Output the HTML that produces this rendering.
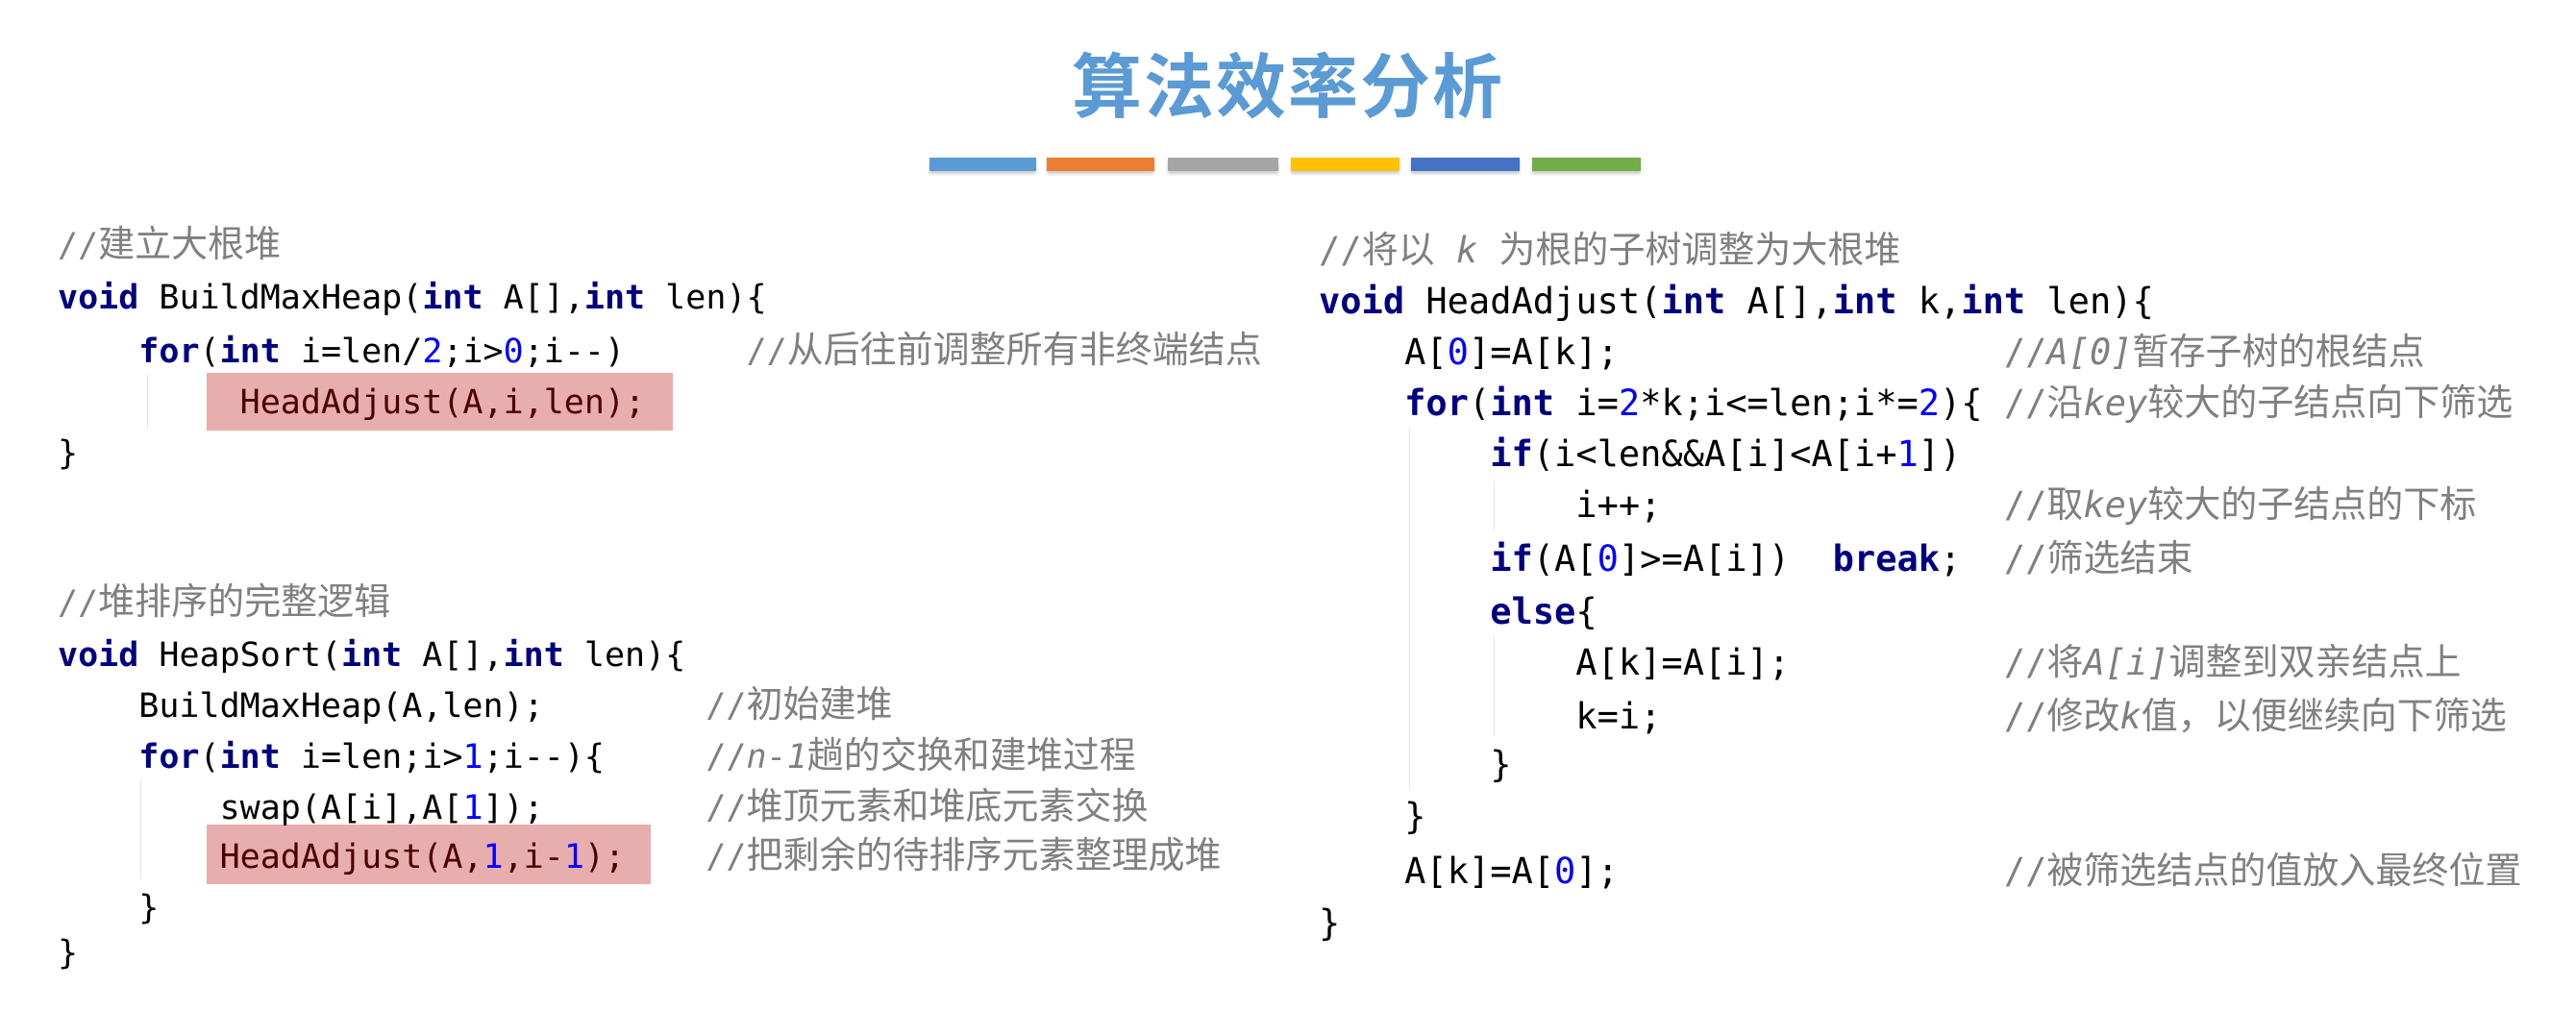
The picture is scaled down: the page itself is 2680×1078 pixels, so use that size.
<!DOCTYPE html>
<html><head><meta charset="utf-8"><style>
body{margin:0;width:2680px;height:1078px;background:#fff;position:relative;overflow:hidden;}
.t{position:absolute;left:0;width:2680px;top:38px;text-align:center;font:bold 73px "Noto Sans CJK SC",sans-serif;color:#5b9bd5;line-height:94px;letter-spacing:2px}
.bar{position:absolute;top:164px;height:14px;box-shadow:0 3px 3px rgba(0,0,0,.2)}
.l{position:absolute;white-space:pre;font:35px "DejaVu Sans Mono","Liberation Mono","Noto Sans CJK SC",monospace;line-height:53px;height:53px;color:#000}
.r{font-size:37px}
.k{color:#000080;font-weight:bold}
.n{color:#0000ff}
.c{color:#808080}
.c i{font-style:italic}
.z{font-weight:normal;font-family:"Noto Sans CJK SC",sans-serif;font-size:38px;line-height:10px}
.hl{position:absolute;background:#e8adad}
.h{color:#4a0000}
.g{position:absolute;width:1px;background:#e2e2e2}
</style></head><body>
<div class="t">算法效率分析</div>
<div class="bar" style="left:967px;width:111px;background:#5b9bd5"></div>
<div class="bar" style="left:1089px;width:112px;background:#ed7d31"></div>
<div class="bar" style="left:1215px;width:115px;background:#a5a5a5"></div>
<div class="bar" style="left:1343px;width:113px;background:#ffc000"></div>
<div class="bar" style="left:1468px;width:113px;background:#4472c4"></div>
<div class="bar" style="left:1594px;width:113px;background:#70ad47"></div>

<div class="hl" style="left:215px;top:388px;width:485px;height:60px"></div>
<div class="hl" style="left:215px;top:858px;width:462px;height:62px"></div>
<div class="g" style="left:153px;top:390px;height:56px"></div>
<div class="g" style="left:146px;top:812px;height:102px"></div>

<div class="l c" style="left:60px;top:230px">//<b class="z">建立大根堆</b></div>
<div class="l" style="left:60px;top:284px"><span class="k">void</span> BuildMaxHeap(<span class="k">int</span> A[],<span class="k">int</span> len){</div>
<div class="l" style="left:60px;top:340px">    <span class="k">for</span>(<span class="k">int</span> i=len/<span class="n">2</span>;i&gt;<span class="n">0</span>;i--)      <span class="c">//<b class="z">从后往前调整所有非终端结点</b></span></div>
<div class="l h" style="left:60px;top:393px">         HeadAdjust(A,i,len);</div>
<div class="l" style="left:60px;top:446px">}</div>

<div class="l c" style="left:60px;top:602px">//<b class="z">堆排序的完整逻辑</b></div>
<div class="l" style="left:60px;top:656px"><span class="k">void</span> HeapSort(<span class="k">int</span> A[],<span class="k">int</span> len){</div>
<div class="l" style="left:60px;top:709px">    BuildMaxHeap(A,len);        <span class="c">//<b class="z">初始建堆</b></span></div>
<div class="l" style="left:60px;top:762px">    <span class="k">for</span>(<span class="k">int</span> i=len;i&gt;<span class="n">1</span>;i--){     <span class="c">//<i>n-1</i><b class="z">趟的交换和建堆过程</b></span></div>
<div class="l" style="left:60px;top:815px">        swap(A[i],A[<span class="n">1</span>]);        <span class="c">//<b class="z">堆顶元素和堆底元素交换</b></span></div>
<div class="l" style="left:60px;top:866px">        <span class="h">HeadAdjust(A,<span class="n">1</span>,i-<span class="n">1</span>);</span>    <span class="c">//<b class="z">把剩余的待排序元素整理成堆</b></span></div>
<div class="l" style="left:60px;top:919px">    }</div>
<div class="l" style="left:60px;top:966px">}</div>

<div class="g" style="left:1466px;top:445px;height:377px"></div>
<div class="g" style="left:1554px;top:501px;height:51px"></div>
<div class="g" style="left:1554px;top:662px;height:104px"></div>

<div class="l r c" style="left:1372px;top:234px">//<b class="z">将以</b> <i>k</i> <b class="z">为根的子树调整为大根堆</b></div>
<div class="l r" style="left:1372px;top:287px"><span class="k">void</span> HeadAdjust(<span class="k">int</span> A[],<span class="k">int</span> k,<span class="k">int</span> len){</div>
<div class="l r" style="left:1372px;top:340px">    A[<span class="n">0</span>]=A[k];                  <span class="c">//<i>A[0]</i><b class="z">暂存子树的根结点</b></span></div>
<div class="l r" style="left:1372px;top:393px">    <span class="k">for</span>(<span class="k">int</span> i=<span class="n">2</span>*k;i&lt;=len;i*=<span class="n">2</span>){ <span class="c">//<b class="z">沿</b><i>key</i><b class="z">较大的子结点向下筛选</b></span></div>
<div class="l r" style="left:1372px;top:446px">        <span class="k">if</span>(i&lt;len&amp;&amp;A[i]&lt;A[i+<span class="n">1</span>])</div>
<div class="l r" style="left:1372px;top:499px">            i++;                <span class="c">//<b class="z">取</b><i>key</i><b class="z">较大的子结点的下标</b></span></div>
<div class="l r" style="left:1372px;top:555px">        <span class="k">if</span>(A[<span class="n">0</span>]&gt;=A[i])  <span class="k">break</span>;  <span class="c">//<b class="z">筛选结束</b></span></div>
<div class="l r" style="left:1372px;top:610px">        <span class="k">else</span>{</div>
<div class="l r" style="left:1372px;top:663px">            A[k]=A[i];          <span class="c">//<b class="z">将</b><i>A[i]</i><b class="z">调整到双亲结点上</b></span></div>
<div class="l r" style="left:1372px;top:719px">            k=i;                <span class="c">//<b class="z">修改</b><i>k</i><b class="z">值，以便继续向下筛选</b></span></div>
<div class="l r" style="left:1372px;top:769px">        }</div>
<div class="l r" style="left:1372px;top:823px">    }</div>
<div class="l r" style="left:1372px;top:880px">    A[k]=A[<span class="n">0</span>];                  <span class="c">//<b class="z">被筛选结点的值放入最终位置</b></span></div>
<div class="l r" style="left:1372px;top:934px">}</div>
</body></html>
